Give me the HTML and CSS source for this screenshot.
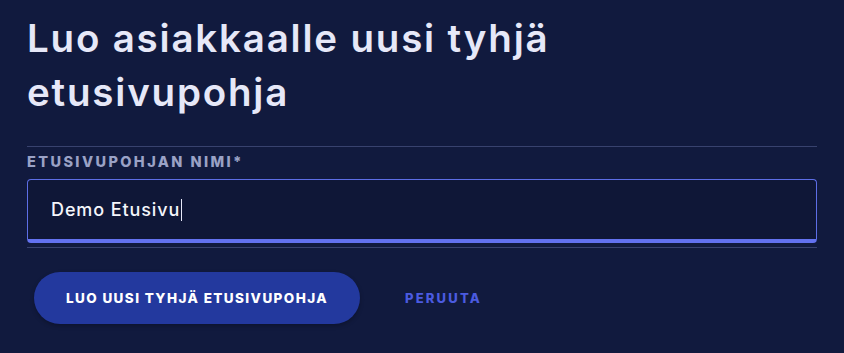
FILE: index.html
```html
<!DOCTYPE html>
<html lang="fi">
<head>
<meta charset="utf-8">
<link rel="stylesheet" href="styles.css">
</head>
<body>
<div class="page">
  <h1 class="title">Luo asiakkaalle uusi tyhjä etusivupohja</h1>
  <div class="divider top"></div>
  <label class="label">ETUSIVUPOHJAN NIMI*</label>
  <div class="input"><span class="value">Demo Etusivu</span><span class="caret"></span></div>
  <div class="divider bottom"></div>
  <div class="actions">
    <button class="primary">LUO UUSI TYHJÄ ETUSIVUPOHJA</button>
    <button class="link">PERUUTA</button>
  </div>
</div>
</body>
</html>
```

FILE: styles.css
```css
html, body {
  margin: 0;
  padding: 0;
  background: #111a3e;
  height: 100%;
}
.page {
  width: 790px;
  padding: 11px 0 0 27px;
  font-family: Inter, "Noto Sans", sans-serif;
}
.title {
  margin: 0;
  width: 640px;
  font-size: 38.5px;
  line-height: 54px;
  font-weight: 600;
  letter-spacing: 1.8px;
  color: #e6e8f8;
}
.divider {
  height: 1px;
  background: #38426e;
}
.divider.top { margin-top: 27px; }
.divider.bottom { margin-top: 4px; }
.label {
  display: block;
  margin-top: 6px;
  font-size: 14.5px;
  line-height: 18px;
  font-weight: 800;
  letter-spacing: 2.4px;
  color: #9aa2c6;
}
.input {
  margin-top: 8px;
  height: 64px;
  border: 1px solid #5d6ee6;
  border-bottom: 4px solid #6372f0;
  border-radius: 4px;
  background: #0f1737;
  display: flex;
  align-items: center;
  padding-left: 23px;
  box-sizing: border-box;
}
.value {
  font-size: 18px;
  font-weight: 500;
  color: #f4f5fb;
  letter-spacing: 0.9px;
}
.caret {
  width: 1px;
  height: 22px;
  background: #e6e8f8;
  margin-left: 1px;
}
.actions {
  margin-top: 24px;
  display: flex;
  align-items: center;
  padding-left: 7px;
}
.primary {
  height: 52px;
  width: 326px;
  border: none;
  border-radius: 26px;
  background: #23399e;
  color: #ffffff;
  font-family: Inter, "Noto Sans", sans-serif;
  font-size: 13.5px;
  font-weight: 800;
  letter-spacing: 1.4px;
  box-shadow: 0 2px 4px rgba(0,0,0,0.25);
  padding: 0;
}
.link {
  margin-left: 45px;
  border: none;
  background: none;
  padding: 0;
  font-family: Inter, "Noto Sans", sans-serif;
  font-size: 13px;
  font-weight: 800;
  letter-spacing: 2.2px;
  color: #4b5be0;
}
```
